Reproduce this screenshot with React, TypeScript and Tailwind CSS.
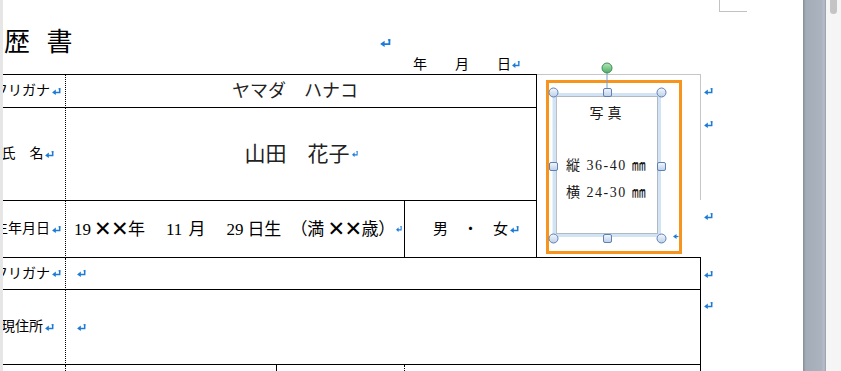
import React from "react";

const BLUE = "#1b7bd6";

function RM({ w = 9, h = 7, className = "" }: { w?: number; h?: number; className?: string }) {
  return (
    <svg width={w} height={h} viewBox="0 0 9 7" className={"shrink-0 " + className} fill="none" preserveAspectRatio="none">
      <path d="M7.7 0.3 V4.4 H3" stroke={BLUE} strokeWidth="1.5" />
      <path d="M6.5 0.8 H8.4" stroke={BLUE} strokeWidth="1.1" />
      <path d="M0.1 4.4 L3.8 1.5 L3.8 7 Z" fill={BLUE} />
    </svg>
  );
}

function X() {
  return (
    <span className="inline-block w-[17px] text-center font-['DejaVu_Sans'] font-bold text-[21px] leading-none">✕</span>
  );
}

const labelBase =
  "flex items-center justify-center pr-[5px] border-black border-r [border-right-style:dotted] text-[14px] leading-none whitespace-nowrap overflow-visible";

export default function App() {
  return (
    <div className="w-[841px] h-[371px] flex overflow-hidden bg-white text-black font-['Liberation_Serif','Noto_Sans_CJK_JP',serif]">
      <div className="w-[3px] shrink-0 bg-[#e6e6e6] relative z-10" />
      <div className="w-[800px] shrink-0 h-full overflow-hidden flex flex-col">
        <div className="h-[12px] shrink-0">
          <div className="ml-[716px] w-[28px] h-[12px] border-l border-b border-[#c2c2c2]" />
        </div>
        <div className="mt-[17px] h-[28px] shrink-0 flex items-center">
          <div className="w-[377px] pl-[1px] text-[26px] leading-[28px] [word-spacing:10px]">歴 書</div>
          <RM w={11} h={8} />
        </div>
        <div className="h-[15px] shrink-0 flex items-center pl-[410px] text-[14px] leading-[15px]">
          <span>年　　月　　日</span>
          <RM w={8} h={7} className="ml-[1px]" />
        </div>
        <div className="h-[2px] shrink-0" />
        <div className="-ml-[8px] shrink-0 grid grid-cols-[71px_211px_128px_132px_164px_60px] grid-rows-[34px_93px_57px_32px_75px_20px]">
          {/* Row 1 */}
          <div className={labelBase + " border-t border-b col-start-1 row-start-1"}>
            <span>フリガナ</span>
            <RM className="ml-[2px]" />
          </div>
          <div className="col-start-2 col-span-3 row-start-1 flex items-center justify-center border-t border-b border-r border-black text-[18px] leading-none text-[#222] pr-[12px]">
            ヤマダ　ハナコ
          </div>
          {/* Photo cell */}
          <div className="col-start-5 row-start-1 row-span-3 relative border-t border-b border-t-[#c6c6c6] border-b-black flex justify-end items-start">
            <div className="w-px h-[125px] bg-[#c6c6c6]" />
            <div className="absolute left-[9px] top-[5px] w-[136px] h-[174px] border-[3px] border-[#f7941e]">
              <div className="ml-[7px] mt-[13px] w-[102px] h-[138px] flex flex-col text-[14px] leading-[16px] text-[#1a1a1a]">
                <div className="mt-[10px] flex justify-center gap-[4px] pr-[3px] text-[14px]">
                  <span>写</span>
                  <span>真</span>
                </div>
                <div className="mt-[36px] pl-[10px] tracking-[1.5px] whitespace-nowrap">縦 36-40 ㎜</div>
                <div className="mt-[11px] pl-[10px] tracking-[1.5px] whitespace-nowrap">横 24-30 ㎜</div>
              </div>
            </div>
            <svg className="absolute left-[3px] top-[-15px] pointer-events-none" width="150" height="190" viewBox="0 0 150 190">
              <defs>
                <linearGradient id="hg" x1="0" y1="0" x2="0" y2="1">
                  <stop offset="0" stopColor="#f4f8fd" />
                  <stop offset="1" stopColor="#bccfe8" />
                </linearGradient>
                <linearGradient id="gg" x1="0" y1="0" x2="0" y2="1">
                  <stop offset="0" stopColor="#b4e6bd" />
                  <stop offset="1" stopColor="#4dae62" />
                </linearGradient>
              </defs>
              <line x1="67" y1="12" x2="67" y2="28" stroke="#7d9ccd" strokeWidth="1" />
              <rect x="14.5" y="35" width="104.5" height="140" fill="none" stroke="#d3e3f6" strokeWidth="4" />
              <rect x="16.5" y="36.5" width="101" height="137" fill="none" stroke="#8c8c8c" strokeWidth="1" strokeDasharray="1 1" />
              <circle cx="67" cy="8" r="5" fill="url(#gg)" stroke="#3f8e52" strokeWidth="1" />
              {[
                [13.5, 32.5],
                [121.5, 32.5],
                [13.5, 178.5],
                [121.5, 178.5],
              ].map(([x, y], i) => (
                <circle key={"c" + i} cx={x} cy={y} r="4.5" fill="url(#hg)" stroke="#5d80b6" strokeWidth="1" />
              ))}
              {[
                [67.5, 32.5],
                [13.5, 106.5],
                [121.5, 106.5],
                [67.5, 178.5],
              ].map(([x, y], i) => (
                <rect key={"s" + i} x={x - 4} y={y - 4} width="8" height="8" rx="1.5" fill="url(#hg)" stroke="#5d80b6" strokeWidth="1" />
              ))}
              <path d="M133 176.5 L136.5 174 L136.5 179 Z" fill={BLUE} />
              <path d="M136 176.5 H138.5" stroke={BLUE} strokeWidth="1.2" />
            </svg>
          </div>
          <div className="col-start-6 row-start-1 flex items-center pl-[3px]">
            <RM />
          </div>

          {/* Row 2 */}
          <div className={labelBase + " border-b col-start-1 row-start-2"}>
            <span>氏　名</span>
            <RM className="ml-[1px]" />
          </div>
          <div className="col-start-2 col-span-3 row-start-2 flex items-center justify-center border-b border-r border-black text-[21px] leading-none text-[#222]">
            <span>山田　花子</span>
            <RM w={6} h={6} className="ml-[2px]" />
          </div>
          <div className="col-start-6 row-start-2 flex items-start pt-[13px] pl-[3px]">
            <RM />
          </div>

          {/* Row 3 */}
          <div className={labelBase + " border-b col-start-1 row-start-3"}>
            <span>生年月日</span>
            <RM className="ml-[2px]" />
          </div>
          <div className="col-start-2 col-span-2 row-start-3 flex items-center pl-[8px] border-b border-r border-black text-[17px] leading-none whitespace-nowrap">
            <span>19</span>
            <span className="ml-[3px] flex">
              <X />
              <X />
            </span>
            <span>年</span>
            <span className="ml-[21px]">11</span>
            <span className="ml-[6px]">月</span>
            <span className="ml-[21px]">29</span>
            <span className="ml-[4px]">日生</span>
            <span className="ml-[9px]">（満</span>
            <span className="ml-[3px] flex">
              <X />
              <X />
            </span>
            <span>歳）</span>
            <RM w={6} h={6} className="ml-[1px]" />
          </div>
          <div className="col-start-4 row-start-3 flex items-center pl-[28px] border-b border-r border-black text-[15px] leading-none">
            <span>男　・　女</span>
            <RM className="ml-[2px]" />
          </div>
          <div className="col-start-6 row-start-3 flex items-start pt-[12px] pl-[3px]">
            <RM />
          </div>

          {/* Row 4 */}
          <div className={labelBase + " border-b col-start-1 row-start-4"}>
            <span>フリガナ</span>
            <RM className="ml-[2px]" />
          </div>
          <div className="col-start-2 col-span-4 row-start-4 flex items-center pl-[11px] border-b border-r border-black">
            <RM />
          </div>
          <div className="col-start-6 row-start-4 flex items-center pl-[3px]">
            <RM />
          </div>

          {/* Row 5 */}
          <div className={labelBase + " border-b col-start-1 row-start-5"}>
            <span>現住所</span>
            <RM className="ml-[2px]" />
          </div>
          <div className="col-start-2 col-span-4 row-start-5 flex items-center pl-[11px] border-b border-r border-black">
            <RM />
          </div>
          <div className="col-start-6 row-start-5 flex items-start pt-[12px] pl-[3px]">
            <RM />
          </div>

          {/* Row 6 */}
          <div className={labelBase + " col-start-1 row-start-6"} />
          <div className="col-start-2 row-start-6 border-r border-black" />
          <div className="col-start-3 row-start-6 border-r border-black [border-right-style:dotted]" />
          <div className="col-start-4 col-span-2 row-start-6 border-r border-black" />
        </div>
      </div>
      <div className="w-[23px] shrink-0 h-full bg-[linear-gradient(to_right,#868d99,#a4acb8_12%,#abb3bf_80%,#b7bec9_92%,#959ca7)]" />
      <div className="w-[15px] shrink-0 h-full bg-[#f5f5f5] pl-[4px]">
        <div className="w-[7px] h-[14px] rounded-b-[4px] bg-[#c4c4c4]" />
      </div>
    </div>
  );
}
